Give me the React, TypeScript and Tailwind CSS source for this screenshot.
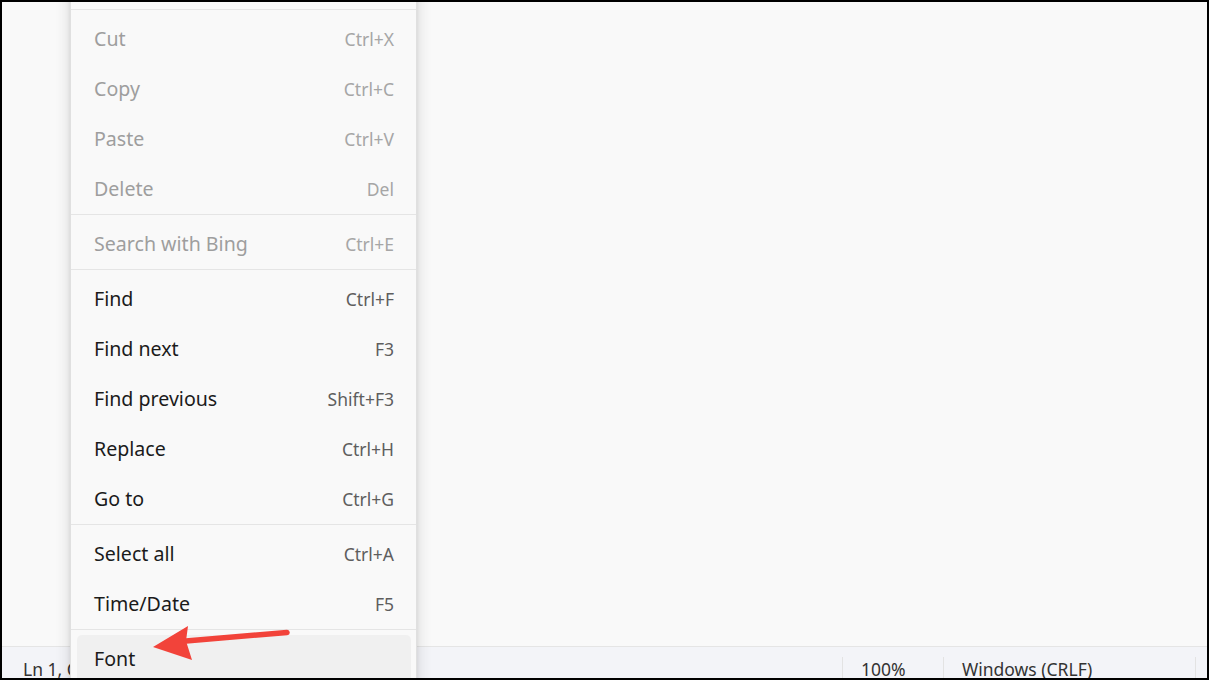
import React from "react";

type Item = { label: string; keys: string; disabled?: boolean; hover?: boolean } | "sep";

const items: Item[] = [
  { label: "Undo", keys: "Ctrl+Z", disabled: true },
  "sep",
  { label: "Cut", keys: "Ctrl+X", disabled: true },
  { label: "Copy", keys: "Ctrl+C", disabled: true },
  { label: "Paste", keys: "Ctrl+V", disabled: true },
  { label: "Delete", keys: "Del", disabled: true },
  "sep",
  { label: "Search with Bing", keys: "Ctrl+E", disabled: true },
  "sep",
  { label: "Find", keys: "Ctrl+F" },
  { label: "Find next", keys: "F3" },
  { label: "Find previous", keys: "Shift+F3" },
  { label: "Replace", keys: "Ctrl+H" },
  { label: "Go to", keys: "Ctrl+G" },
  "sep",
  { label: "Select all", keys: "Ctrl+A" },
  { label: "Time/Date", keys: "F5" },
  "sep",
  { label: "Font", keys: "", hover: true },
];

const font = { fontFamily: '"Noto Sans", "Open Sans", sans-serif' };

export default function App() {
  return (
    <div className="h-[680px] w-[1209px] bg-black p-[2px]" style={font}>
      <div className="relative flex h-[676px] w-[1205px] flex-col overflow-hidden bg-[#f9f9f9]">
        <div className="flex-1" />

        {/* status bar */}
        <div className="flex h-[32px] border-t border-[#e5e5e5] bg-[#f3f4f8] text-[17.5px] text-[#333]">
          <div className="flex-1 pl-[21px] pt-[11px] leading-[22px]">Ln 1, Col 1</div>
          <div className="mt-[10px] w-px bg-[#e3e3e3]" />
          <div className="w-[100px] pl-[18px] pt-[11px] leading-[22px]">100%</div>
          <div className="mt-[10px] w-px bg-[#e3e3e3]" />
          <div className="w-[251px] pl-[18px] pt-[11px] leading-[22px]">Windows (CRLF)</div>
          <div className="mt-[10px] w-px bg-[#e3e3e3]" />
          <div className="w-[11px]" />
        </div>

        {/* context menu */}
        <div className="absolute left-[68px] top-[-48px] w-[347px] rounded-[8px] border border-[#e0e0e0] bg-[#f9f9f9] py-[4px] shadow-[0_8px_16px_rgba(0,0,0,0.14),0_0_4px_rgba(0,0,0,0.08)]">
          {items.map((it, i) =>
            it === "sep" ? (
              <div key={i} className="mb-[4px] h-px bg-[#e5e5e5]" />
            ) : (
              <div key={i} className="py-px pl-[6px] pr-[5px]">
                <div
                  className={`flex h-[48px] items-center justify-between rounded-[5px] px-[17px] ${
                    it.hover ? "bg-[#f0f0f0]" : ""
                  }`}
                >
                  <span
                    className={`text-[19.6px] ${it.disabled ? "text-[#9e9e9e]" : "text-[#1b1b1b]"}`}
                  >
                    {it.label}
                  </span>
                  <span
                    className={`text-[17.5px] ${it.disabled ? "text-[#a6a6a6]" : "text-[#5e5e5e]"}`}
                  >
                    {it.keys}
                  </span>
                </div>
              </div>
            )
          )}
        </div>

        {/* annotation arrow */}
        <svg className="absolute left-0 top-0" width="1205" height="676" viewBox="2 2 1205 676">
          <line x1="186" y1="641" x2="287" y2="632.5" stroke="#f2433a" strokeWidth="5.5" strokeLinecap="round" />
          <polygon points="153,647 188,626 186,641 192,660" fill="#f2433a" />
        </svg>
      </div>
    </div>
  );
}
